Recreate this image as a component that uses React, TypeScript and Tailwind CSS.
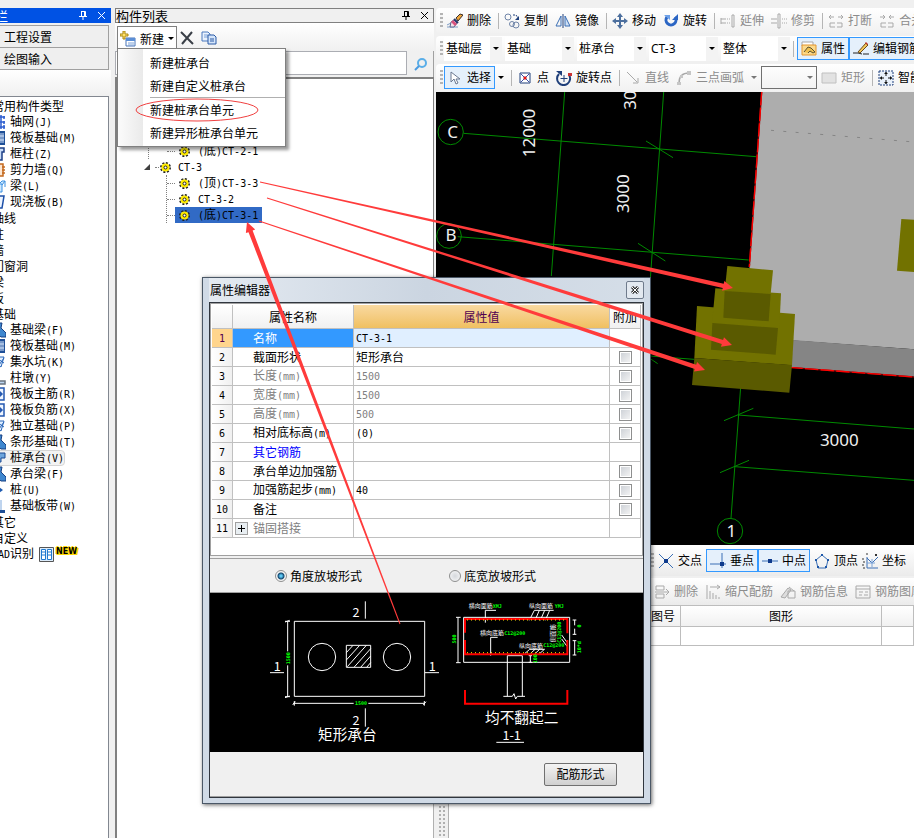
import type { ReactNode } from 'react';

/* Latin runs are set in a half-width face so that they line up with the CJK grid */
function Mix({ text }: { text: string }) {
  return (
    <>
      {text.split(/([\x20-\x7e]+)/).map((part, i) =>
        i % 2 === 1 ? (
          <span key={i} className="font-['DejaVu_Sans_Mono',monospace] text-[10px]">{part}</span>
        ) : (
          part
        )
      )}
    </>
  );
}

function Icon({ children }: { children: ReactNode }) {
  return (
    <svg width="16" height="16" viewBox="0 0 16 16" fill="none" className="shrink-0">
      {children}
    </svg>
  );
}

const BLUE = '#3b6fb5';
const NAVY = '#1f3f7a';
const GREY = '#a9a9a9';

const icons: Record<string, ReactNode> = {
  erase: (
    <>
      <path d="M0 14h11M0 12l4-2" stroke="#7f9cc4" />
      <path d="M4 9l3-2 3 3-3 4H3z" fill="#f3dfe6" stroke="#5a6a90" />
      <path d="M6 7l4 4-2 2-4-4z" fill="#d9507c" />
      <path d="M9 5l4-4 3 1-5 6z" fill="#f0a63a" stroke="#3a2f2a" />
      <path d="M7 6l4 4" stroke="#26386b" strokeWidth="2" />
    </>
  ),
  copy: (
    <>
      <circle cx="4" cy="4" r="3" stroke="#7085a8" />
      <circle cx="8" cy="11" r="2.500" stroke="#7085a8" />
      <circle cx="12" cy="12" r="3" stroke="#7085a8" />
      <path d="M9 2h3l2 3" stroke={NAVY} strokeDasharray="2 1" />
      <path d="M15 3v4h-4z" fill={NAVY} />
    </>
  ),
  mirror: (
    <>
      <path d="M6 3v10H1z" stroke={BLUE} />
      <path d="M10 3v10h5z" fill="#cfe0f5" stroke={BLUE} />
      <path d="M8 1v14" stroke={NAVY} />
    </>
  ),
  move: (
    <>
      <path d="M8 2v12M2 8h12" stroke="#4c6f9e" strokeWidth="2" />
      <path d="M8 0l3 4H5zM8 16l3-4H5zM0 8l4-3v6zM16 8l-4-3v6z" fill="#4c6f9e" />
    </>
  ),
  rotate: (
    <>
      <path d="M4 4a5 5 0 1 0 8 0" stroke="#2c66c4" strokeWidth="3" />
      <path d="M15 1v6H9z" fill="#2c66c4" />
      <path d="M1 2h6v5z" fill="#6da0e8" />
    </>
  ),
  extend: (
    <>
      <path d="M1 6h5M1 10h5M1 5v6" stroke={GREY} />
      <path d="M7 6h4M7 10h4" stroke={GREY} strokeDasharray="1 1" />
      <path d="M12 2h2v12h-2z" stroke={GREY} />
    </>
  ),
  trim: (
    <>
      <path d="M0 6h6M0 10h6" stroke={GREY} />
      <path d="M11 6h5M11 10h5" stroke={GREY} strokeDasharray="1 1" />
      <path d="M7 1h2v14H7z" stroke={GREY} />
    </>
  ),
  split: (
    <>
      <path d="M1 4h5M10 4h5M3 2L1 4l2 2M13 2l2 2-2 2" stroke={GREY} />
      <path d="M7 10H2v4h5M9 10h5v4H9" stroke={GREY} />
    </>
  ),
  join: (
    <>
      <path d="M1 4h5M10 4h5M4 2l2 2-2 2M12 2l-2 2 2 2" stroke={GREY} />
      <path d="M7 10H2v4h5M9 10h5v4H9" stroke={GREY} />
    </>
  ),
  props: (
    <>
      <path d="M1 1h11v4H1z" fill="#fff" stroke="#a7a7a7" />
      <path d="M1 4h14v10H1z" fill="#fbd98c" stroke="#e2952e" />
      <path d="M3 11l4-5 3 1 4 4-2 1-3-2-2 2" fill="#efc050" stroke="#5b5230" />
    </>
  ),
  editRebar: (
    <>
      <path d="M0 12h5M10 13h6M5 12l4 1" stroke="#222" />
      <path d="M5 11l8-9 2 2-8 8z" fill="#f3c85a" stroke="#6b4b1d" />
      <path d="M12 2l1-1 2 2-1 1z" fill="#c0392b" />
    </>
  ),
  pointer: <path d="M4 2l0 10 3-3 2 5 2-1-2-4h4z" fill="#fff" stroke="#6a7890" />,
  point: (
    <>
      <path d="M3 3h10v10H3z" fill="#fff" stroke={NAVY} />
      <path d="M4 4l8 8M12 4l-8 8" stroke="#3d50a8" />
      <path d="M7 7h2v2H7z" fill="#e01818" stroke="#e01818" />
    </>
  ),
  rotPoint: (
    <>
      <path d="M3 4a6.500 6.500 0 1 0 10 1" stroke={NAVY} strokeWidth="2" />
      <path d="M0 1h6v5z" fill={NAVY} />
      <path d="M8 5v7M4.500 8.500h7" stroke={NAVY} />
      <path d="M12 3h4v3h-4z" fill="#c33" />
    </>
  ),
  line: <path d="M2 2l10 10M8 13h5V8" stroke={GREY} />,
  arc: (
    <>
      <path d="M3 13C3 7 6 3 13 3" stroke={GREY} strokeWidth="1.500" />
      <path d="M1 12h4v3H1zM4 5h3v3H4zM11 1h4v4h-4z" fill="#c6c6c6" />
    </>
  ),
  rect: <path d="M1 3h14v10H1z" fill="#e2e2e2" stroke="#c0c0c0" />,
  smart: (
    <>
      <path d="M1 1h14v14H1z" fill="#e9f1fb" stroke={NAVY} strokeDasharray="2 1" />
      <path d="M8 2v4M8 10v4M2 8h4M10 8h4" stroke="#111" />
      <path d="M8 2l2 2H6zM8 14l2-2H6zM2 8l2-2v4zM14 8l-2-2v4z" fill="#111" />
    </>
  ),
  cross: (
    <>
      <path d="M1 1l14 14M15 1L1 15" stroke={BLUE} />
      <path d="M6 6h4v4H6z" fill="#0e3a8c" />
    </>
  ),
  perp: (
    <>
      <path d="M12 0v15M0 11h16" stroke={BLUE} />
      <path d="M10 9h4v4h-4z" fill="#0e3a8c" />
    </>
  ),
  mid: (
    <>
      <path d="M0 8h16" stroke={BLUE} />
      <path d="M6 6h4v4H6z" fill="#0e3a8c" />
    </>
  ),
  vertex: (
    <>
      <path d="M8 2l6 5-2 8H4L2 7z" stroke={BLUE} />
      <path d="M7 1h2v2H7zM1 6h2v2H1zM13 6h2v2h-2zM3 13h2v2H3zM11 13h2v2h-2z" fill="#1d57a8" />
    </>
  ),
  coord: (
    <>
      <path d="M5 4v11h11M5 5l5 5 6-6" stroke={BLUE} />
      <path d="M5 10h8M10 6v8" stroke="#7ba3d8" />
      <path d="M0 6h2M1 9h2M0 12h2M1 15h2M4 1h2M13 1l2 2M15 1l-2 2" stroke="#333" />
    </>
  ),
  rowDel: <path d="M2 2h8v4H2zM2 10h8v4H2zM1 8h14M12 5l3 3-3 3" stroke={GREY} />,
  scale: <path d="M2 1v14M5 3h10M12 1l3 2-3 2M5 7v8M8 9v6M11 11v4M14 13v2" stroke={GREY} />,
  info: (
    <>
      <path d="M1 13l7-9 3 2-6 8z" fill="#ddd" stroke={GREY} />
      <path d="M8 7h7v7H8zM9 3l5 4" stroke={GREY} />
    </>
  ),
  lib: <path d="M1 2h14v12H1zM1 5h14M4 8h4M10 8h3M4 11h3M9 11h4" stroke={GREY} />,
};

function Tool({ icon, label, muted, active }: { icon: string; label: string; muted?: boolean; active?: boolean }) {
  const tone = muted ? 'text-[#8c8c8c]' : 'text-black';
  const box = active ? 'h-[23px] border border-[#3399ff] bg-[#e5f0fb] px-[3px]' : '';
  return (
    <button type="button" className={`flex shrink-0 items-center gap-1 whitespace-nowrap ${tone} ${box}`}>
      <Icon>{icons[icon]}</Icon>
      {label}
    </button>
  );
}

function Sep() {
  return <span className="-mr-0.5 h-4 w-px shrink-0 bg-[#b5b5b5]" />;
}

function Grip() {
  return <span className="h-4 w-[3px] shrink-0 bg-[repeating-linear-gradient(#b4b4b4_0_2px,#f4f4f4_2px_4px)]" />;
}

function Caret({ muted }: { muted?: boolean }) {
  return (
    <svg width="6" height="3" viewBox="0 0 6 3" className="shrink-0">
      <path d="M0 0h6L3 3z" fill={muted ? '#777' : '#000'} />
    </svg>
  );
}

function Combo({ value, label, width }: { value: string; label: string; width: string }) {
  return (
    <div className={`relative flex h-6 shrink-0 items-center bg-[linear-gradient(90deg,#fff_0_calc(100%-12px),#f3f3f3_calc(100%-12px))] ${width}`}>
      <select aria-label={label} className="w-full appearance-none bg-transparent pl-0.5 outline-none">
        <option>{value}</option>
      </select>
      <span className="pointer-events-none absolute inset-y-0 right-[3px] flex items-center"><Caret /></span>
    </div>
  );
}

function Pin({ color }: { color: string }) {
  return (
    <svg width="8" height="9" viewBox="0 0 8 9" fill="none">
      <path d="M2 0.500h4.500v5M2.500 0v5M5.500 0v5M0 5.500h8M4 6v3" stroke={color} />
    </svg>
  );
}

function Cross({ color }: { color: string }) {
  return (
    <svg width="9" height="9" viewBox="0 0 9 9" fill="none">
      <path d="M1 1l7 7M8 1L1 8" stroke={color} />
    </svg>
  );
}

type Kind = { label: string; icon?: string };

const kinds: Kind[] = [
  { label: '常用构件类型' },
  { label: '轴网(J)', icon: 'grid' },
  { label: '筏板基础(M)', icon: 'raft' },
  { label: '框柱(Z)', icon: 'column' },
  { label: '剪力墙(Q)', icon: 'wall' },
  { label: '梁(L)', icon: 'beam' },
  { label: '现浇板(B)', icon: 'slab' },
  { label: '轴线' },
  { label: '柱' },
  { label: '墙' },
  { label: '门窗洞' },
  { label: '梁' },
  { label: '板' },
  { label: '基础' },
  { label: '基础梁(F)', icon: 'solid' },
  { label: '筏板基础(M)', icon: 'raft' },
  { label: '集水坑(K)', icon: 'pit' },
  { label: '柱墩(Y)', icon: 'pier' },
  { label: '筏板主筋(R)', icon: 'bar' },
  { label: '筏板负筋(X)', icon: 'bar' },
  { label: '独立基础(P)', icon: 'pit' },
  { label: '条形基础(T)', icon: 'solid' },
  { label: '桩承台(V)', icon: 'cap' },
  { label: '承台梁(F)', icon: 'solid' },
  { label: '桩(U)', icon: 'pile' },
  { label: '基础板带(W)', icon: 'strip' },
  { label: '其它' },
  { label: '自定义' },
  { label: 'CAD识别' },
];

const kindIcons: Record<string, ReactNode> = {
  grid: <path d="M11 1v14M9 3h6M9 8h6M9 13h6M14 2v3M14 7v3M14 11v4" stroke="#2f5fd0" strokeWidth="1.500" />,
  raft: (
    <>
      <path d="M0 1h15v14H0z" fill="#1e4f97" />
      <path d="M11 3v10M13 3v10M8 6h6M8 10h6" stroke="#d4e4fa" />
    </>
  ),
  column: <path d="M8 2h6v4h-2v8h-3" fill="#c9dcf7" stroke="#1c3f86" strokeWidth="1.500" />,
  wall: <path d="M2 2h11v12H2M12 5h3M12 8h3M12 11h3" fill="#fbe6d2" stroke="#c46a1f" strokeWidth="1.500" />,
  beam: <path d="M9 6h3v8H8M9 6l3-3h3l-3 4M15 3v6" fill="#cbe8ff" stroke="#3a8fe0" />,
  slab: <path d="M2 2h12l-2 12H2" fill="#eef5ff" stroke="#1c4fa8" strokeWidth="1.500" />,
  solid: <path d="M4 1h8l-1 5 5 5v4h-5l-6-5z" fill="#3f87cf" stroke="#173f82" />,
  pit: <path d="M6 3h8l-3 10-4-3M8 5l6 4M14 4l-5 7" fill="#dfeeff" stroke="#2b66b8" />,
  pier: <path d="M2 8h7v3h6v3H2" fill="#bcd6f2" stroke="#6a7480" strokeWidth="1.500" />,
  bar: <path d="M2 2h12v12H2M8 8h4M9 5l3 3-3 3" fill="#eef5ff" stroke="#2458b0" strokeWidth="1.500" />,
  cap: <path d="M1 3h14v5h-4v4H1z" fill="#6fa6dd" stroke="#1c4a92" />,
  pile: <path d="M9 5l4 3-4 3z" fill="#1e5ab0" />,
  strip: (
    <>
      <path d="M0 2h6v12H0M11 2v12" stroke="#7ea9dd" />
      <path d="M5 12h10v3H5z" fill="#1e4f97" />
    </>
  ),
};

function KindPanel() {
  return (
    <aside className="flex w-[111px] shrink-0 flex-col">
      <div className="flex h-[15px] items-center overflow-hidden bg-[#0052e4] pr-[5px] text-white">
        <h2 className="-ml-[5px] grow text-[13px] leading-[15px]">栏</h2>
        <button type="button" aria-label="固定"><Pin color="#fff" /></button>
        <button type="button" aria-label="关闭" className="ml-2.5"><Cross color="#fff" /></button>
      </div>
      <div className="mt-0.5 mr-0.5 border-t border-[#a0a0a0]">
        <button type="button" className="block h-[22px] w-full border-r border-b border-[#a0a0a0] bg-[#efefef] pl-1 text-left">工程设置</button>
        <button type="button" className="block h-[22px] w-full border-r border-b border-[#a0a0a0] bg-[#efefef] pl-1 text-left">绘图输入</button>
      </div>
      <div className="h-[26px] shrink-0 bg-linear-to-b from-white to-[#f0f0f0]" />
      <ul className="mr-0.5 grow overflow-hidden border-t border-r border-[#828790] bg-white pt-px">
        {kinds.map((kind, i) => (
          <li key={i} className="-ml-2.5 flex h-4 items-center whitespace-nowrap leading-4">
            {kind.icon ? (
              <span className={`-ml-px flex h-4 items-center gap-1 border ${kind.icon === 'cap' ? 'rounded-sm border-[#d5d5d5] bg-[#f3f3f3]' : 'border-transparent'}`}>
                <Icon>{kindIcons[kind.icon]}</Icon>
                <span><Mix text={kind.label} /></span>
              </span>
            ) : (
              <span className="pl-0.5"><Mix text={kind.label} /></span>
            )}
            {kind.label === 'CAD识别' && (
              <>
                <svg width="15" height="15" viewBox="0 0 15 15" className="ml-[5px]">
                  <path d="M0.500 0.500h14v14h-14z" fill="#dcecfb" stroke="#555" />
                  <path d="M2.500 2.500h4v10h-4zM8.500 2.500h4v10h-4z" fill="#fff" stroke="#1e78d0" />
                  <path d="M3 5h3M3 8h3M9 5h3M9 8h3" stroke="#1e78d0" />
                </svg>
                <b className="ml-0.5 -mt-1 font-['DejaVu_Sans',sans-serif] text-[8px] [text-shadow:1px_0_#ffd800,-1px_0_#ffd800,0_1px_#ffd800,0_-1px_#ffd800,1px_1px_#ffd800,2px_1px_#ffd800]">NEW</b>
              </>
            )}
          </li>
        ))}
      </ul>
    </aside>
  );
}

function Gear() {
  return (
    <svg width="11" height="11" viewBox="0 0 11 11" fill="none" className="shrink-0">
      <circle cx="5.500" cy="5.500" r="4.500" stroke="#222" strokeWidth="2" strokeDasharray="2 1.500" />
      <circle cx="5.500" cy="5.500" r="4" fill="#ffec00" />
      <circle cx="5.500" cy="5.500" r="1.500" fill="#fff" stroke="#222" />
    </svg>
  );
}

function TreeLeaf({ label, selected }: { label: string; selected?: boolean }) {
  return (
    <li className="flex h-4 items-center">
      <span className="w-2 border-t border-dotted border-[#808080]" />
      <span className={`flex h-4 items-center gap-2 pr-1 pl-1 ${selected ? 'bg-[#316ac5]' : ''}`}>
        <Gear />
        <span><Mix text={label} /></span>
      </span>
    </li>
  );
}

function ListPanel() {
  return (
    <section className="ml-1 flex w-[319px] shrink-0 flex-col">
      <div className="flex h-[15px] items-center border border-[#808080] pr-1">
        <h2 className="grow text-[13px] leading-[13px]">构件列表</h2>
        <button type="button" aria-label="固定"><Pin color="#000" /></button>
        <button type="button" aria-label="关闭" className="ml-2.5"><Cross color="#000" /></button>
      </div>
      <div className="flex h-7 items-center bg-linear-to-b from-white to-[#f0f0f0] pt-0.5 pl-0.5">
        <button type="button" aria-haspopup="menu" className="flex h-6 items-center gap-1 border border-b-0 border-[#808080] bg-white px-0.5 whitespace-nowrap">
          <Icon>
            <path d="M6 7h9v8H6z" fill="#fff" stroke="#4874b8" />
            <path d="M6 7h9v3H6z" fill="#5b8ed6" />
            <path d="M8 12h6M8 14h6" stroke="#7aa0d6" />
            <path d="M3 0h2v3h3v2H5v3H3V5H0V3h3z" fill="#ffe36b" stroke="#a98511" />
          </Icon>
          <span>新建</span>
          <Caret />
        </button>
        <button type="button" aria-label="删除" className="ml-0.5">
          <Icon><path d="M2 2l12 12M13 2L3 14" stroke="#3a3f47" strokeWidth="2" /></Icon>
        </button>
        <button type="button" aria-label="复制" className="ml-1.5">
          <Icon>
            <path d="M1 2h6l2 2v7H1z" fill="#eaf2fd" stroke="#4b78bd" />
            <path d="M3 5h4M3 7h4" stroke="#7aa0d6" />
            <path d="M7 5h6l2 2v7H7z" fill="#d5e5fa" stroke="#2b5aa6" />
            <path d="M9 9h4M9 11h4" stroke="#2b5aa6" />
          </Icon>
        </button>
      </div>
      <div className="flex h-[26px] border-r border-[#a0a0a0]">
        <input aria-label="搜索构件" className="h-6 min-w-0 grow border border-[#abadb3] bg-white outline-none" />
        <button type="button" aria-label="搜索" className="flex w-[26px] items-center justify-center">
          <svg width="13" height="13" viewBox="0 0 13 13" fill="none">
            <circle cx="8" cy="5" r="4" stroke="#5aaee8" strokeWidth="2" />
            <path d="M5 8l-4 4" stroke="#4a9be0" strokeWidth="2" />
          </svg>
        </button>
      </div>
      <div className="grow border-t-2 border-r border-l-2 border-[#808080] bg-white pt-16">
        <ul className="ml-[31px] whitespace-nowrap">
          <li className="border-l border-dotted border-[#808080] pl-[18px]">
            <ul><TreeLeaf label="(底)CT-2-1" /></ul>
          </li>
          <li>
            <div className="-ml-1 flex h-4 items-center">
              <svg width="7" height="7" viewBox="0 0 7 7"><path d="M6 0v6H0z" fill="#404040" /></svg>
              <span className="mr-px ml-1 w-1 border-t border-dotted border-[#808080]" />
              <Gear />
              <span className="ml-[7px]"><Mix text="CT-3" /></span>
            </div>
            <ul className="ml-[18px] border-l border-dotted border-[#808080]">
              <TreeLeaf label="(顶)CT-3-3" />
              <TreeLeaf label="CT-3-2" />
              <TreeLeaf label="(底)CT-3-1" selected />
            </ul>
          </li>
        </ul>
      </div>
    </section>
  );
}

function NewMenu() {
  const item = 'block h-[23px] w-full pl-1.5 text-left';
  return (
    <div role="menu" className="absolute top-12 left-[117px] w-[169px] border border-[#808080] bg-[linear-gradient(90deg,#fbfbfb,#eaeaea_25px,#fff_25px)] py-0.5 pl-[26px] shadow-[3px_3px_3px_rgba(0,0,0,0.4)]">
      <button type="button" role="menuitem" className={item}>新建桩承台</button>
      <button type="button" role="menuitem" className={item}>新建自定义桩承台</button>
      <div className="ml-1.5 border-t border-[#b0b0b0]" />
      <button type="button" role="menuitem" className={item}>新建桩承台单元</button>
      <button type="button" role="menuitem" className={item}>新建异形桩承台单元</button>
    </div>
  );
}

function TopBars() {
  const bar = 'flex items-center overflow-hidden rounded-l bg-linear-to-b from-white to-[#f1f1f1] pl-1';
  const tools = 'flex shrink-0 items-center gap-[7px]';
  return (
    <div className="flex flex-col gap-[3px] pb-px font-['Noto_Sans','Noto_Sans_CJK_SC',sans-serif]">
      <div className={`h-[25px] gap-1 ${bar}`}>
        <Grip />
        <div className={tools}>
          <Tool icon="erase" label="删除" />
          <Sep />
          <Tool icon="copy" label="复制" />
          <Tool icon="mirror" label="镜像" />
          <Sep />
          <Tool icon="move" label="移动" />
          <Tool icon="rotate" label="旋转" />
          <Sep />
          <Tool icon="extend" label="延伸" muted />
          <Tool icon="trim" label="修剪" muted />
          <Sep />
          <Tool icon="split" label="打断" muted />
          <Tool icon="join" label="合并" muted />
        </div>
      </div>
      <div className={`h-[25px] gap-px ${bar}`}>
        <Grip />
        <div className="flex shrink-0 gap-[3px]">
          <Combo label="楼层" value="基础层" width="w-[58px]" />
          <Combo label="构件分类" value="基础" width="w-[69px]" />
          <Combo label="构件类型" value="桩承台" width="w-[69px]" />
          <Combo label="构件" value="CT-3" width="w-[69px]" />
          <Combo label="单元" value="整体" width="w-[69px]" />
        </div>
        <span className="mx-0.5 h-4 w-px shrink-0 bg-[#b5b5b5]" />
        <div className="flex shrink-0">
          <Tool icon="props" label="属性" active />
          <Tool icon="editRebar" label="编辑钢筋" active />
        </div>
      </div>
      <div className={`h-[27px] gap-px ${bar}`}>
        <Grip />
        <div className={tools}>
          <div className="flex items-center gap-[3px]">
            <button type="button" className="flex h-[23px] w-[51px] shrink-0 items-center justify-end gap-1 border border-[#3399ff] bg-[#e5f0fb] pr-[3px]">
              <Icon>{icons.pointer}</Icon>
              选择
            </button>
            <Caret />
          </div>
          <Sep />
          <Tool icon="point" label="点" />
          <Tool icon="rotPoint" label="旋转点" />
          <Sep />
          <Tool icon="line" label="直线" muted />
          <Tool icon="arc" label="三点画弧" muted />
          <div className="flex items-center gap-1">
            <Caret muted />
            <div className="relative flex h-[23px] w-14 shrink-0 items-center border border-[#707070]">
              <select aria-label="画弧参数" className="w-full appearance-none outline-none"><option /></select>
              <span className="pointer-events-none absolute inset-y-0 right-[3px] flex items-center"><Caret muted /></span>
            </div>
            <Tool icon="rect" label="矩形" muted />
          </div>
          <Sep />
          <Tool icon="smart" label="智能布置" />
        </div>
      </div>
    </div>
  );
}

/* Three user units of this drawing make one screen pixel */
function ModelView() {
  return (
    <svg viewBox="0 0 1434 1359" preserveAspectRatio="xMinYMin slice" className="h-[453px] w-full bg-black font-['Noto_Sans',sans-serif]">
      <polygon points="977,0 1434,0 1434,772 1000,740 940,525" fill="#adadad" />
      <polygon points="1060,743 1434,772 1434,855 1060,826" fill="#858585" />
      <path d="M1005 115L1434 150" stroke="#858585" strokeWidth="3" strokeDasharray="9 28" />
      <g stroke="#ff0000" strokeWidth="4">
        <path d="M977 0L940 525M1060 826l374 29" stroke="#7a0000" />
        <path d="M977 0L940 525" strokeDasharray="40 7" />
        <path d="M1060 826l374 29" strokeDasharray="40 7" />
      </g>
      <g stroke="#008a00" strokeWidth="3" fill="none">
        <circle cx="44" cy="120" r="38" />
        <circle cx="39" cy="432" r="37" />
        <circle cx="882" cy="1317" r="38" />
        <path d="M83 124L960 194M65 434L938 504M386 0L346 552M683 0L643 560" />
        <path d="M630 147l81 50M606 454l82 53M600 789l175 13M625 788l40 27" />
        <path d="M914 885L885 1279M907 969l527 42M897 1124l537 41" />
        <path d="M864 986l88-37M852 1142l87-37" />
      </g>
      <g fill="#727200">
        <polygon points="1396,381 1434,383 1434,540 1383,536" />
        <polygon points="783,642 1077,666 1068,820 775,798" />
        <polygon points="775,798 1068,819 1060,902 768,879" fill="#5a5a00" />
        <polygon points="838,589 1035,604 1030,709 828,693" />
        <polygon points="829,693 1026,708 1019,788 825,773" fill="#5a5a00" />
        <polygon points="874,522 1011,535 1004,606 866,597" />
        <polygon points="866,597 1004,606 998,688 862,677" fill="#5a5a00" />
      </g>
      <g fill="#f0f0f0" fontSize="51" textAnchor="middle">
        <text x="50" y="138">C</text>
        <text x="45" y="448">B</text>
        <text x="886" y="1335">1</text>
        <text x="1210" y="1062">3000</text>
        <text transform="translate(297 123) rotate(-90)">12000</text>
        <text transform="translate(579 305) rotate(-90)">3000</text>
        <text transform="translate(600 -5) rotate(-90)">3000</text>
      </g>
    </svg>
  );
}

function RebarDock() {
  const bar = 'flex shrink-0 items-center overflow-hidden bg-linear-to-b from-white to-[#ebebeb]';
  return (
    <div className="-ml-[3px] flex grow">
      <div className="flex w-4 shrink-0 justify-center border-x border-[#b0b0b0] bg-[#f0f0f0]">
        <span className="w-[7px] bg-[radial-gradient(#b0b0b0_1px,transparent_1px)] bg-size-[4px_4px]" />
      </div>
      <div className="flex min-w-0 grow flex-col bg-white">
        <div className={`h-[31px] pl-[202px] font-['Noto_Sans','Noto_Sans_CJK_SC',sans-serif] ${bar}`}>
          <Grip />
          <div className="flex shrink-0 items-center gap-1 pl-1">
            <Tool icon="cross" label="交点" />
            <div className="flex">
              <Tool icon="perp" label="垂点" active />
              <Tool icon="mid" label="中点" active />
            </div>
            <Tool icon="vertex" label="顶点" />
            <Tool icon="coord" label="坐标" />
          </div>
        </div>
        <div className="h-0.5 shrink-0 bg-[#f0f0f0]" />
        <div className={`h-[27px] gap-[7px] pl-[205px] font-['Noto_Sans','Noto_Sans_CJK_SC',sans-serif] ${bar}`}>
          <Tool icon="rowDel" label="删除" muted />
          <Tool icon="scale" label="缩尺配筋" muted />
          <Tool icon="info" label="钢筋信息" muted />
          <Tool icon="lib" label="钢筋图库" muted />
        </div>
        <table className="w-full table-fixed border-collapse">
          <thead>
            <tr className="h-[21px] bg-linear-to-b from-white to-[#f0f0f0]">
              <th className="w-[196px] border border-[#bdbdbd] p-0 font-normal"></th>
              <th className="w-[35px] border border-[#bdbdbd] p-0 font-normal whitespace-nowrap">图号</th>
              <th className="w-[201px] border border-[#bdbdbd] p-0 font-normal">图形</th>
              <th className="border border-[#bdbdbd] p-0 font-normal"></th>
            </tr>
          </thead>
          <tbody>
            <tr className="h-[19px]">
              <td className="border border-[#bdbdbd] p-0" />
              <td className="border border-[#bdbdbd] p-0" />
              <td className="border border-[#bdbdbd] p-0" />
              <td className="border border-[#bdbdbd] p-0" />
            </tr>
          </tbody>
        </table>
      </div>
    </div>
  );
}

const rows = [
  { name: '名称', value: 'CT-3-1', tone: 'text-white', extra: false },
  { name: '截面形状', value: '矩形承台', tone: 'text-black', extra: true },
  { name: '长度(mm)', value: '1500', tone: 'text-[#808080]', extra: true },
  { name: '宽度(mm)', value: '1500', tone: 'text-[#808080]', extra: true },
  { name: '高度(mm)', value: '500', tone: 'text-[#808080]', extra: true },
  { name: '相对底标高(m)', value: '(0)', tone: 'text-black', extra: true },
  { name: '其它钢筋', value: '', tone: 'text-[#0000ff]', extra: false },
  { name: '承台单边加强筋', value: '', tone: 'text-black', extra: true },
  { name: '加强筋起步(mm)', value: '40', tone: 'text-black', extra: true },
  { name: '备注', value: '', tone: 'text-black', extra: true },
  { name: '锚固搭接', value: '', tone: 'text-[#808080]', extra: false },
];

function PropertyTable() {
  const cell = 'border-r border-b border-[#c0c0c0] p-0';
  return (
    <table className="w-[429px] table-fixed border-separate border-spacing-0 leading-4">
      <thead>
        <tr className="h-6 bg-linear-to-b from-white to-[#f0f0f0]">
          <th className={`w-[21px] font-normal ${cell}`}></th>
          <th className={`w-[121px] font-normal ${cell}`}>属性名称</th>
          <th className={`w-[256px] bg-linear-to-b from-[#f9d9a0] to-[#f0c060] font-normal text-[#500050] ${cell}`}>属性值</th>
          <th className={`w-[31px] font-normal whitespace-nowrap ${cell}`}>附加</th>
        </tr>
      </thead>
      <tbody>
        {rows.map((row, i) => {
          const current = i === 0;
          const group = i === rows.length - 1;
          return (
            <tr key={row.name} className="h-[19px]">
              <th className={`font-normal ${cell} ${current ? 'bg-[#ffd58d] text-[#500050]' : 'bg-linear-to-r from-white to-[#f0f0f0]'}`}>
                <Mix text={String(i + 1)} />
              </th>
              <td className={`${cell} ${row.tone} ${current ? 'bg-[#3399ff]' : ''}`}>
                <div className={`flex items-center whitespace-nowrap ${group ? 'pl-0.5' : 'pl-5'}`}>
                  {group && (
                    <button type="button" aria-label="展开" className="mr-[5px] flex size-[13px] items-center justify-center border border-[#a0a0a0] bg-[#e8eef2] text-black">
                      <svg width="7" height="7" viewBox="0 0 7 7"><path d="M3 0h1v3h3v1H4v3H3V4H0V3h3z" /></svg>
                    </button>
                  )}
                  <span><Mix text={row.name} /></span>
                </div>
              </td>
              <td className={`pl-0.5! ${cell} ${current ? 'bg-[#e0efff]' : row.tone}`}><Mix text={row.value} /></td>
              <td className={cell}>
                {row.extra && (
                  <input
                    type="checkbox"
                    aria-label={`${row.name} 附加`}
                    className="mx-auto block size-[13px] appearance-none border border-[#8e8f8f] bg-linear-to-br from-[#cbcfd5] to-[#f6f6f6] bg-clip-content p-px checked:to-[#3399ff]"
                  />
                )}
              </td>
            </tr>
          );
        })}
      </tbody>
    </table>
  );
}

function CapSketch() {
  return (
    <svg viewBox="15 99 1299 477" className="block w-full bg-black font-['Noto_Sans_CJK_SC',sans-serif]" fill="none">
      <g stroke="#fff" strokeWidth="3">
        <path d="M268 184h391v225H268z" />
        <circle cx="351" cy="291" r="41" />
        <circle cx="576" cy="291" r="41" />
        <path d="M424 256h73v66h-73z" />
        <path d="M424 278l20-22M424 300l40-44M427 320l57-64M447 322l50-56M467 322l30-34M485 322l12-14" />
        <path d="M248 184v90M248 316v95M240 186l14-5M240 413l14-5M240 184h15M240 410h15" />
        <path d="M264 430h182M490 430h170M263 435l8-10M655 435l8-10M268 423v14M658 423v14" />
        <path d="M481 124v52M481 445v55M195 338h42M660 338h42M874 547h83" />
        <path d="M776 172h318v135H776zM907 409V287h45v122M895 409h27l5-8 5 16 5-8h23" />
        <path d="M873 151h-32v37M878 232h-21v55M1046 151h-58l-15 30M1003 151l-13 30M1019 151l-13 30M1034 151l-13 30" />
        <path d="M1019 268h-45l-14 12M990 268l-13 12M1004 268l-13 12M1018 268l-13 12M1070 225l16 22M1070 237l16 22" />
        <path d="M759 172v136M753 172h14M753 308h14M976 287v20M971 287h10M971 307h10" />
        <path d="M1109 180v16M1109 206v17M1103 180h11M1103 223h11M1109 242v43M1103 242h11M1103 285h11" />
      </g>
      <g stroke="#ff0000" strokeWidth="6">
        <path d="M780 218v-41h307v43M780 240v43h307v-43" />
        <path d="M780 390v41h307v-41" />
      </g>
      <path d="M786 180h298M786 278h298" stroke="#ffe600" strokeWidth="3" strokeDasharray="3 9" />
      <g fill="#fff" textAnchor="middle">
        <g fontSize="38">
          <text x="453" y="171">2</text>
          <text x="453" y="494">2</text>
          <text x="217" y="333">1</text>
          <text x="682" y="333">1</text>
          <text x="920" y="539">1-1</text>
        </g>
        <g fontSize="44">
          <text x="427" y="541">矩形承台</text>
          <text x="950" y="488">均不翻起二</text>
        </g>
        <g fontSize="18">
          <text x="827" y="145">横向面筋</text>
          <text x="1008" y="145">纵向面筋</text>
          <text x="861" y="226">横向底筋</text>
          <text x="978" y="263">纵向底筋</text>
          <text transform="translate(1051 220) rotate(-90)">侧面筋</text>
        </g>
      </g>
      <g fill="#00ff00" fontSize="15" fontWeight="bold" textAnchor="middle" className="font-['DejaVu_Sans_Mono',monospace]">
        <text x="877" y="144">XMJ</text>
        <text x="1063" y="144">YMJ</text>
        <text x="929" y="225">C12@200</text>
        <text x="1046" y="262">C12@200</text>
        <text x="468" y="435">1500</text>
        <text transform="translate(255 295) rotate(-90)">1500</text>
        <text transform="translate(752 237) rotate(-90)">500</text>
        <text transform="translate(995 296) rotate(-90)">100</text>
        <text transform="translate(1067 217) rotate(-90)">C12@200</text>
        <text transform="translate(1127 198) rotate(-90)">0</text>
        <text transform="translate(1127 262) rotate(-90)">10*d</text>
      </g>
    </svg>
  );
}

function PropertyDialog() {
  const radio =
    'size-3 shrink-0 appearance-none rounded-full border border-[#8e8f8f] bg-[radial-gradient(#d5d8dc,#fafafa)] checked:bg-[radial-gradient(circle,#5cc8f5_0_1px,#12466e_3px,#f4f4f4_4px)]';
  return (
    <div role="dialog" aria-label="属性编辑器" className="absolute top-[277px] left-[202px] w-[449px] border border-[#4a5766] bg-[#d0dae6] px-1.5 pb-[5px] shadow-[1px_1px_4px_rgba(0,0,0,0.6)]">
      <div className="flex h-6 items-center justify-between bg-linear-to-r from-[#e4eaf1] via-[#cbd5e1] to-[#d5dee8] pl-px">
        <h2>属性编辑器</h2>
        <button type="button" aria-label="关闭" className="flex size-[18px] items-center justify-center rounded-xs border border-[#6f7b8c] bg-[#e3e9f0]">
          <svg width="8" height="8" viewBox="0 0 8 8" fill="none">
            <path d="M1 1l6 6M7 1L1 7" stroke="#333" strokeWidth="3" />
            <path d="M1 1l6 6M7 1L1 7" stroke="#fff" />
          </svg>
        </button>
      </div>
      <div className="border border-[#30363e] bg-[#f0f0f0]">
        <div className="border border-[#a0a0a0] bg-white px-px pt-px pb-[17px]">
          <PropertyTable />
        </div>
        <div className="mt-0.5 flex h-[35px] items-center border-y border-[#a0a0a0] pl-[65px]">
          <label className="flex w-[174px] items-center gap-[3px]">
            <input type="radio" name="slope" defaultChecked className={radio} />
            角度放坡形式
          </label>
          <label className="flex items-center gap-[3px]">
            <input type="radio" name="slope" className={radio} />
            底宽放坡形式
          </label>
        </div>
        <CapSketch />
        <div className="flex h-[45px] items-center justify-end border-b border-[#a0a0a0] pr-[26px]">
          <button type="button" className="h-[23px] w-[73px] rounded-xs border border-[#707070] bg-linear-to-b from-[#f4f4f4] to-[#d0d0d0]">配筋形式</button>
        </div>
      </div>
    </div>
  );
}

function Arrow({ from, to }: { from: [number, number]; to: [number, number] }) {
  const dx = to[0] - from[0];
  const dy = to[1] - from[1];
  const len = Math.hypot(dx, dy);
  const at = (along: number, side: number) =>
    `${from[0] + (dx * along - dy * side) / len},${from[1] + (dy * along + dx * side) / len}`;
  const neck = len - 10;
  const points = [at(0, 0.5), at(neck, 2.2), at(neck, 5), at(len, 0), at(neck, -5), at(neck, -2.2), at(0, -0.5)];
  return <polygon points={points.join(' ')} />;
}

function Markup() {
  return (
    <svg width="100%" height="100%" className="pointer-events-none absolute inset-0" fill="#ff3b3b">
      <ellipse cx="197" cy="110" rx="61" ry="11" fill="none" stroke="#f04040" />
      <Arrow from={[260, 182]} to={[733, 288]} />
      <Arrow from={[267, 198]} to={[732, 345]} />
      <Arrow from={[259, 221]} to={[705, 370]} />
      <Arrow from={[400, 624]} to={[247, 222]} />
    </svg>
  );
}

export default function App() {
  return (
    <main className="relative flex min-h-screen flex-col overflow-hidden bg-[#f0f0f0] pt-2 font-['Noto_Sans_CJK_SC',sans-serif] text-xs leading-4 text-black select-none">
      <div className="flex grow">
        <KindPanel />
        <ListPanel />
        <section className="ml-0.5 flex min-w-0 grow flex-col">
          <TopBars />
          <ModelView />
          <RebarDock />
        </section>
      </div>
      <NewMenu />
      <PropertyDialog />
      <Markup />
    </main>
  );
}
